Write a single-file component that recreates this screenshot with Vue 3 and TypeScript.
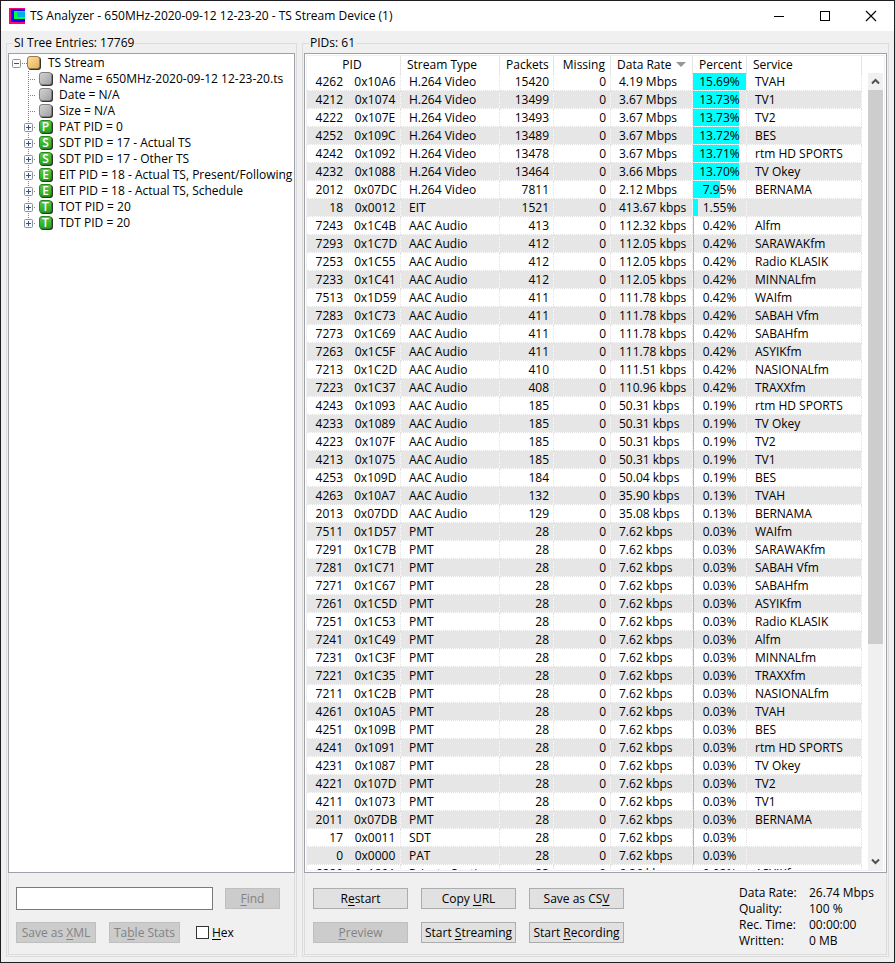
<script setup lang="ts">
import { ref } from 'vue'

interface PidRow {
  pid: number
  hex: string
  type: string
  packets: number
  missing: number
  rate: string
  percent: number
  service: string
}

interface TreeNode {
  label: string
  letter: string
}

const nodes: TreeNode[] = [
  { label: 'Name = 650MHz-2020-09-12 12-23-20.ts', letter: '' },
  { label: 'Date = N/A', letter: '' },
  { label: 'Size = N/A', letter: '' },
  { label: 'PAT PID = 0', letter: 'P' },
  { label: 'SDT PID = 17 - Actual TS', letter: 'S' },
  { label: 'SDT PID = 17 - Other TS', letter: 'S' },
  { label: 'EIT PID = 18 - Actual TS, Present/Following', letter: 'E' },
  { label: 'EIT PID = 18 - Actual TS, Schedule', letter: 'E' },
  { label: 'TOT PID = 20', letter: 'T' },
  { label: 'TDT PID = 20', letter: 'T' },
]

const source = `4262|0x10A6|H.264 Video|15420|4.19 Mbps|15.69|TVAH
4212|0x1074|H.264 Video|13499|3.67 Mbps|13.73|TV1
4222|0x107E|H.264 Video|13493|3.67 Mbps|13.73|TV2
4252|0x109C|H.264 Video|13489|3.67 Mbps|13.72|BES
4242|0x1092|H.264 Video|13478|3.67 Mbps|13.71|rtm HD SPORTS
4232|0x1088|H.264 Video|13464|3.66 Mbps|13.70|TV Okey
2012|0x07DC|H.264 Video|7811|2.12 Mbps|7.95|BERNAMA
18|0x0012|EIT|1521|413.67 kbps|1.55|
7243|0x1C4B|AAC Audio|413|112.32 kbps|0.42|Alfm
7293|0x1C7D|AAC Audio|412|112.05 kbps|0.42|SARAWAKfm
7253|0x1C55|AAC Audio|412|112.05 kbps|0.42|Radio KLASIK
7233|0x1C41|AAC Audio|412|112.05 kbps|0.42|MINNALfm
7513|0x1D59|AAC Audio|411|111.78 kbps|0.42|WAIfm
7283|0x1C73|AAC Audio|411|111.78 kbps|0.42|SABAH Vfm
7273|0x1C69|AAC Audio|411|111.78 kbps|0.42|SABAHfm
7263|0x1C5F|AAC Audio|411|111.78 kbps|0.42|ASYIKfm
7213|0x1C2D|AAC Audio|410|111.51 kbps|0.42|NASIONALfm
7223|0x1C37|AAC Audio|408|110.96 kbps|0.42|TRAXXfm
4243|0x1093|AAC Audio|185|50.31 kbps|0.19|rtm HD SPORTS
4233|0x1089|AAC Audio|185|50.31 kbps|0.19|TV Okey
4223|0x107F|AAC Audio|185|50.31 kbps|0.19|TV2
4213|0x1075|AAC Audio|185|50.31 kbps|0.19|TV1
4253|0x109D|AAC Audio|184|50.04 kbps|0.19|BES
4263|0x10A7|AAC Audio|132|35.90 kbps|0.13|TVAH
2013|0x07DD|AAC Audio|129|35.08 kbps|0.13|BERNAMA
7511|0x1D57|PMT|28|7.62 kbps|0.03|WAIfm
7291|0x1C7B|PMT|28|7.62 kbps|0.03|SARAWAKfm
7281|0x1C71|PMT|28|7.62 kbps|0.03|SABAH Vfm
7271|0x1C67|PMT|28|7.62 kbps|0.03|SABAHfm
7261|0x1C5D|PMT|28|7.62 kbps|0.03|ASYIKfm
7251|0x1C53|PMT|28|7.62 kbps|0.03|Radio KLASIK
7241|0x1C49|PMT|28|7.62 kbps|0.03|Alfm
7231|0x1C3F|PMT|28|7.62 kbps|0.03|MINNALfm
7221|0x1C35|PMT|28|7.62 kbps|0.03|TRAXXfm
7211|0x1C2B|PMT|28|7.62 kbps|0.03|NASIONALfm
4261|0x10A5|PMT|28|7.62 kbps|0.03|TVAH
4251|0x109B|PMT|28|7.62 kbps|0.03|BES
4241|0x1091|PMT|28|7.62 kbps|0.03|rtm HD SPORTS
4231|0x1087|PMT|28|7.62 kbps|0.03|TV Okey
4221|0x107D|PMT|28|7.62 kbps|0.03|TV2
4211|0x1073|PMT|28|7.62 kbps|0.03|TV1
2011|0x07DB|PMT|28|7.62 kbps|0.03|BERNAMA
17|0x0011|SDT|28|7.62 kbps|0.03|
0|0x0000|PAT|28|7.62 kbps|0.03|
6289|0x1891|Private Section|23|6.26 kbps|0.02|ASYIKfm`

const rows: PidRow[] = source.split('\n').map((line) => {
  const [pid, hex, type, packets, rate, percent, service] = line.split('|')
  return { pid: +pid, hex, type, packets: +packets, missing: 0, rate, percent: +percent, service }
})
const maxPercent = Math.max(...rows.map((r) => r.percent))

const search = ref('')
const hexMode = ref(false)
const pane = ref<HTMLElement | null>(null)
const scroll = (rowsBy: number) => pane.value?.scrollBy(0, rowsBy * 18)

const stats: [string, string][] = [
  ['Data Rate:', '26.74 Mbps'],
  ['Quality:', '100 %'],
  ['Rec. Time:', '00:00:00'],
  ['Written:', '0 MB'],
]
</script>

<template>
  <div class="window">
    <header class="titlebar">
      <svg class="logo" width="16" height="16" viewBox="0 0 16 16" shape-rendering="crispEdges">
        <rect width="16" height="16" fill="#ff0080" />
        <rect x="2" y="1" width="14" height="13" fill="#1000ff" />
        <rect x="5" y="3" width="11" height="8" fill="#00ff40" />
        <rect x="8" y="4" width="8" height="5" fill="#00b0e8" />
      </svg>
      <h1>TS Analyzer - 650MHz-2020-09-12 12-23-20 - TS Stream Device (1)</h1>
      <button class="caption" type="button" aria-label="Minimize">
        <svg width="12" height="12" viewBox="0 0 12 12"><path d="M1 6.5H11" stroke="#000" /></svg>
      </button>
      <button class="caption" type="button" aria-label="Maximize">
        <svg width="12" height="12" viewBox="0 0 12 12"><rect x="1.5" y="1.5" width="9" height="9" fill="none" stroke="#000" /></svg>
      </button>
      <button class="caption" type="button" aria-label="Close">
        <svg width="12" height="12" viewBox="0 0 12 12"><path d="M1 1L11 11M11 1L1 11" stroke="#000" stroke-width="1.1" /></svg>
      </button>
    </header>

    <main class="content">
      <fieldset class="group tree-group">
        <legend>SI Tree Entries: 17769</legend>
        <div class="box tree">
          <div class="node root">
            <svg class="expander" width="9" height="9" viewBox="0 0 9 9">
              <rect x=".5" y=".5" width="8" height="8" rx="1" fill="#fafafa" stroke="#919191" />
              <path d="M2 4.5H7" stroke="#3050a0" />
            </svg>
            <svg class="stub" width="6" height="16" viewBox="0 0 6 16"><path d="M1 8.5H6" stroke="#808080" stroke-dasharray="1 1" /></svg>
            <svg class="badge" width="14" height="14" viewBox="0 0 14 14">
              <rect x="1" y="1" width="13" height="13" rx="3" fill="#333" />
              <rect x=".5" y=".5" width="12" height="12" rx="2.5" fill="url(#amber)" stroke="#9a7a48" />
            </svg>
            <span>TS Stream</span>
          </div>
          <div v-for="(n, i) in nodes" :key="n.label" class="node child">
            <svg class="branch" width="15" height="16" viewBox="0 0 15 16">
              <path :d="i === nodes.length - 1 ? 'M4.5 0V8' : 'M4.5 0V16'" stroke="#808080" stroke-dasharray="1 1" />
              <path d="M4 8.5H11" stroke="#808080" stroke-dasharray="1 1" />
              <g v-if="n.letter">
                <rect x=".5" y="4.5" width="8" height="8" rx="1" fill="#fafafa" stroke="#919191" />
                <path d="M2 8.5H7M4.5 6V11" stroke="#3050a0" />
              </g>
            </svg>
            <svg class="badge" width="14" height="14" viewBox="0 0 14 14">
              <rect x="1" y="1" width="13" height="13" rx="3" fill="#333" />
              <rect x=".5" y=".5" width="12" height="12" rx="2.5" :fill="n.letter ? 'url(#green)' : 'url(#grey)'" :stroke="n.letter ? '#228a1c' : '#808080'" />
              <text v-if="n.letter" x="6.5" y="11" text-anchor="middle" class="letter">{{ n.letter }}</text>
            </svg>
            <span>{{ n.label }}</span>
          </div>
          <svg class="defs" width="0" height="0">
            <defs>
              <linearGradient id="amber" x2="1" y2="1"><stop stop-color="#ffdf9c" /><stop offset="1" stop-color="#e2b05c" /></linearGradient>
              <linearGradient id="grey" x2="1" y2="1"><stop stop-color="#d4d4d4" /><stop offset="1" stop-color="#a0a0a0" /></linearGradient>
              <linearGradient id="green" x2="0" y2="1"><stop stop-color="#5fca48" /><stop offset="1" stop-color="#22a51c" /></linearGradient>
            </defs>
          </svg>
        </div>
        <div class="panel tree-panel">
          <div class="find-row">
            <input v-model="search" class="search" type="text" aria-label="Search text" />
            <button class="btn find" type="button" disabled><u>F</u>ind</button>
          </div>
          <div class="tools">
            <button class="btn xml" type="button" disabled>Save as <u>X</u>ML</button>
            <button class="btn table-stats" type="button" disabled>Ta<u>b</u>le Stats</button>
            <label class="hex"><input v-model="hexMode" type="checkbox" /><span><u>H</u>ex</span></label>
          </div>
        </div>
      </fieldset>

      <fieldset class="group pid-group">
        <legend>PIDs: 61</legend>
        <div class="box list">
          <div ref="pane" class="pane">
            <table>
              <colgroup>
                <col class="c-pid" /><col class="c-type" /><col class="c-packets" /><col class="c-missing" />
                <col class="c-rate" /><col class="c-percent" /><col />
              </colgroup>
              <thead>
                <tr>
                  <th class="mid">PID</th>
                  <th>Stream Type</th>
                  <th class="num">Packets</th>
                  <th class="num">Missing</th>
                  <th>Data Rate<svg class="sort" width="10" height="5" viewBox="0 0 10 5"><path d="M0 0H10L5 5Z" fill="#969696" /></svg></th>
                  <th class="num">Percent</th>
                  <th>Service</th>
                </tr>
              </thead>
              <tbody>
                <tr v-for="r in rows" :key="r.hex">
                  <td><span class="ids"><span>{{ r.pid }}</span><span>{{ r.hex }}</span></span></td>
                  <td>{{ r.type }}</td>
                  <td class="num">{{ r.packets }}</td>
                  <td class="num">{{ r.missing }}</td>
                  <td>{{ r.rate }}</td>
                  <td class="share">
                    <span class="bar" :style="{ width: (r.percent / maxPercent) * 100 + '%' }"></span>
                    <span class="value">{{ r.percent.toFixed(2) }}%</span>
                  </td>
                  <td>{{ r.service }}</td>
                </tr>
              </tbody>
            </table>
          </div>
          <div class="scrollbar">
            <button type="button" aria-label="Scroll up" @click="scroll(-1)">
              <svg width="9" height="7" viewBox="0 0 9 7"><path d="M1 5.5L4.5 2L8 5.5" fill="none" stroke="#505050" stroke-width="2" /></svg>
            </button>
            <div class="track"><div class="thumb"></div></div>
            <button type="button" aria-label="Scroll down" @click="scroll(1)">
              <svg width="9" height="7" viewBox="0 0 9 7"><path d="M1 1.5L4.5 5L8 1.5" fill="none" stroke="#505050" stroke-width="2" /></svg>
            </button>
          </div>
        </div>
        <div class="panel pid-panel">
          <div class="actions">
            <button class="btn" type="button">R<u>e</u>start</button>
            <button class="btn" type="button">Copy <u>U</u>RL</button>
            <button class="btn" type="button">Save as CS<u>V</u></button>
            <button class="btn" type="button" disabled><u>P</u>review</button>
            <button class="btn" type="button">Start <u>S</u>treaming</button>
            <button class="btn" type="button">Start <u>R</u>ecording</button>
          </div>
          <dl class="stats">
            <template v-for="[k, v] in stats" :key="k">
              <dt>{{ k }}</dt>
              <dd>{{ v }}</dd>
            </template>
          </dl>
        </div>
      </fieldset>
    </main>
  </div>
</template>

<style>
body {
  margin: 0;
}
</style>

<style scoped>
* {
  box-sizing: border-box;
}
.window {
  display: flex;
  flex-direction: column;
  height: 100vh;
  border: 1px solid #1f1d22;
  background: #f0f0f0;
  color: #000;
  font: 12px/16px "Open Sans", "Noto Sans", sans-serif;
}
.titlebar {
  display: flex;
  align-items: center;
  flex: none;
  height: 30px;
  padding-left: 8px;
  background: #fff;
}
h1 {
  flex: 1;
  margin: 0 0 0 5px;
  font: inherit;
  white-space: nowrap;
}
.caption {
  display: flex;
  align-items: center;
  justify-content: center;
  width: 46px;
  height: 30px;
  padding: 0;
  border: 0;
  background: none;
}
.content {
  display: flex;
  flex: 1;
  gap: 5px;
  min-height: 0;
  padding: 4px 5px 5px;
}
.group {
  display: flex;
  flex-direction: column;
  min-width: 0;
  min-height: 0;
  margin: 0;
  padding: 2px 1px 1px;
  border: 1px solid #dcdcdc;
}
.tree-group {
  flex: none;
  width: 291px;
}
.pid-group {
  flex: 1;
}
legend {
  margin-left: 5px;
  padding: 0 1px;
}
.box {
  flex: 1;
  min-height: 0;
  border: 1px solid #a0a1a8;
  background: #fff;
  overflow: hidden;
}
.panel {
  flex: none;
  height: 82px;
  border: 1px solid #dcdcdc;
  border-top: 0;
}

/* Tree */
.tree {
  padding: 1px 0 0 3px;
}
.node {
  display: flex;
  align-items: center;
  height: 16px;
  white-space: nowrap;
}
.child {
  padding-left: 12px;
}
.node svg {
  flex: none;
}
.root .badge {
  margin-right: 7px;
}
.child .badge {
  margin-right: 6px;
}
.letter {
  fill: #fff;
  font: 600 12px "Open Sans", "Noto Sans", sans-serif;
}
.defs {
  display: block;
}

/* Controls */
.btn {
  height: 21px;
  padding: 0;
  border: 1px solid #adadad;
  background: #e1e1e1;
  color: #000;
  font: inherit;
  line-height: 19px;
  white-space: nowrap;
}
.btn:disabled {
  border-color: #bfbfbf;
  background: #ccc;
  color: #838383;
}
u {
  text-decoration: underline;
  text-underline-offset: 2px;
  text-decoration-skip-ink: none;
}
.tree-panel {
  display: flex;
  flex-direction: column;
  gap: 12px;
  padding: 14px 14px 0 7px;
}
.find-row,
.tools {
  display: flex;
  align-items: center;
}
.find-row {
  gap: 12px;
}
.search {
  flex: 1;
  min-width: 0;
  height: 23px;
  padding: 0 4px;
  border: 1px solid #7a7a7a;
  background: #fff;
  font: inherit;
}
.find {
  width: 55px;
}
.xml {
  width: 80px;
}
.table-stats {
  width: 71px;
  margin: 0 16px 0 13px;
}
.hex {
  display: flex;
  align-items: center;
  gap: 3px;
}
.hex input {
  appearance: none;
  width: 13px;
  height: 13px;
  margin: 0;
  border: 1px solid #333;
  background: #fff;
}
.hex input:checked {
  box-shadow: inset 0 0 0 2px #fff;
  background: #333;
}
.pid-panel {
  display: flex;
  justify-content: space-between;
  padding: 12px 17px 0 8px;
}
.actions {
  display: grid;
  grid-template-columns: repeat(3, 95px);
  gap: 13px;
  align-content: start;
  padding-top: 3px;
}
.stats {
  display: grid;
  grid-template-columns: 70px 60px;
  align-content: start;
  margin: 0;
  white-space: nowrap;
}
.stats dd {
  margin: 0;
}

/* PID list */
.list {
  display: flex;
  padding: 1px;
}
.pane {
  flex: 1;
  min-width: 0;
  border: solid #f0f0f0;
  border-width: 1px 0 1px 1px;
  overflow: hidden;
}
table {
  width: 100%;
  border-spacing: 0;
  table-layout: fixed;
}
.c-pid {
  width: 94px;
}
.c-type {
  width: 99px;
}
.c-packets {
  width: 54px;
}
.c-missing {
  width: 57px;
}
.c-rate {
  width: 82px;
}
.c-percent {
  width: 54px;
}
th,
td {
  line-height: 17px;
  text-align: left;
  white-space: nowrap;
  overflow: hidden;
}
th {
  position: sticky;
  top: 0;
  z-index: 1;
  height: 17px;
  padding: 0 5px 0 6px;
  border-right: 1px solid #e5e5e5;
  background: #fff;
  font-weight: 400;
}
td {
  height: 18px;
  padding: 0 4px 0 8px;
  border-right: 1px dotted #e2e2e2;
  border-bottom: 1px dotted #e2e2e2;
  background-clip: padding-box;
}
tbody tr:nth-child(even) td {
  background-color: #e6e6e6;
}
th.mid {
  padding: 0 7px 0 4px;
  text-align: center;
}
.num {
  text-align: right;
}
.sort {
  margin: 0 0 2px 4px;
}
.ids {
  display: grid;
  grid-template-columns: 28px 42px;
  gap: 11px;
}
.ids span:first-child {
  text-align: right;
}
.ids span:last-child {
  text-align: center;
}
.share {
  position: relative;
  padding: 0;
  text-align: center;
}
.bar {
  position: absolute;
  inset: 0 auto 0 0;
  background: #0ff;
}
.value {
  position: relative;
}
.scrollbar {
  display: flex;
  flex-direction: column;
  flex: none;
  width: 23px;
  padding: 17px 1px 0 6px;
  border: solid #f0f0f0;
  border-width: 1px 1px 1px 0;
}
.scrollbar button {
  display: flex;
  align-items: center;
  justify-content: center;
  flex: none;
  height: 17px;
  padding: 0;
  border: 0;
  background: #f0f0f0;
}
.track {
  flex: 1;
  background: #f0f0f0;
}
.thumb {
  height: 72.6%;
  background: #cdcdcd;
}
</style>
